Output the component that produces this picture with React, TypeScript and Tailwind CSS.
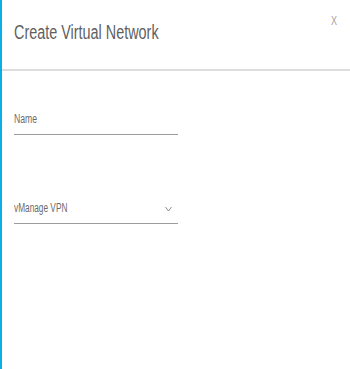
export default function App() {
  return (
    <div
      className="flex h-[369px] w-[350px] flex-col border-l-2 border-[#0aade4] bg-white"
      style={{ fontFamily: '"Liberation Sans", Arial, sans-serif' }}
    >
      {/* Header */}
      <div className="flex h-[71px] items-start justify-between border-b-2 border-[#dddddd] pl-3 pr-3">
        <h1 className="mt-[20px] inline-block origin-left scale-x-[0.72] whitespace-nowrap text-[20px] leading-6 text-[#5f5f62]">
          Create Virtual Network
        </h1>
        <button className="mt-[15px] mr-[1px] inline-block origin-right scale-x-[0.75] text-[12px] leading-3 text-[#a3a3a5]">
          X
        </button>
      </div>

      {/* Form */}
      <div className="flex flex-col pl-3">
        <label className="mt-[40px] flex w-[164px] items-end border-b border-[#9c9c9c] pb-[7px]">
          <span className="inline-block origin-left scale-x-[0.72] whitespace-nowrap text-[12px] leading-4 text-[#6a6a6d]">
            Name
          </span>
        </label>

        <label className="mt-[65px] flex w-[164px] items-end justify-between border-b border-[#9c9c9c] pb-[7px]">
          <span className="inline-block origin-left scale-x-[0.69] whitespace-nowrap text-[12px] leading-4 text-[#6a6a6d]">
            vManage VPN
          </span>
          <svg width="7" height="6" viewBox="0 0 7 6" className="mr-[6px] mb-[4px]">
            <path d="M0.5 1l3 4 3-4" fill="none" stroke="#8d8d90" strokeWidth="1" />
          </svg>
        </label>
      </div>
    </div>
  );
}
